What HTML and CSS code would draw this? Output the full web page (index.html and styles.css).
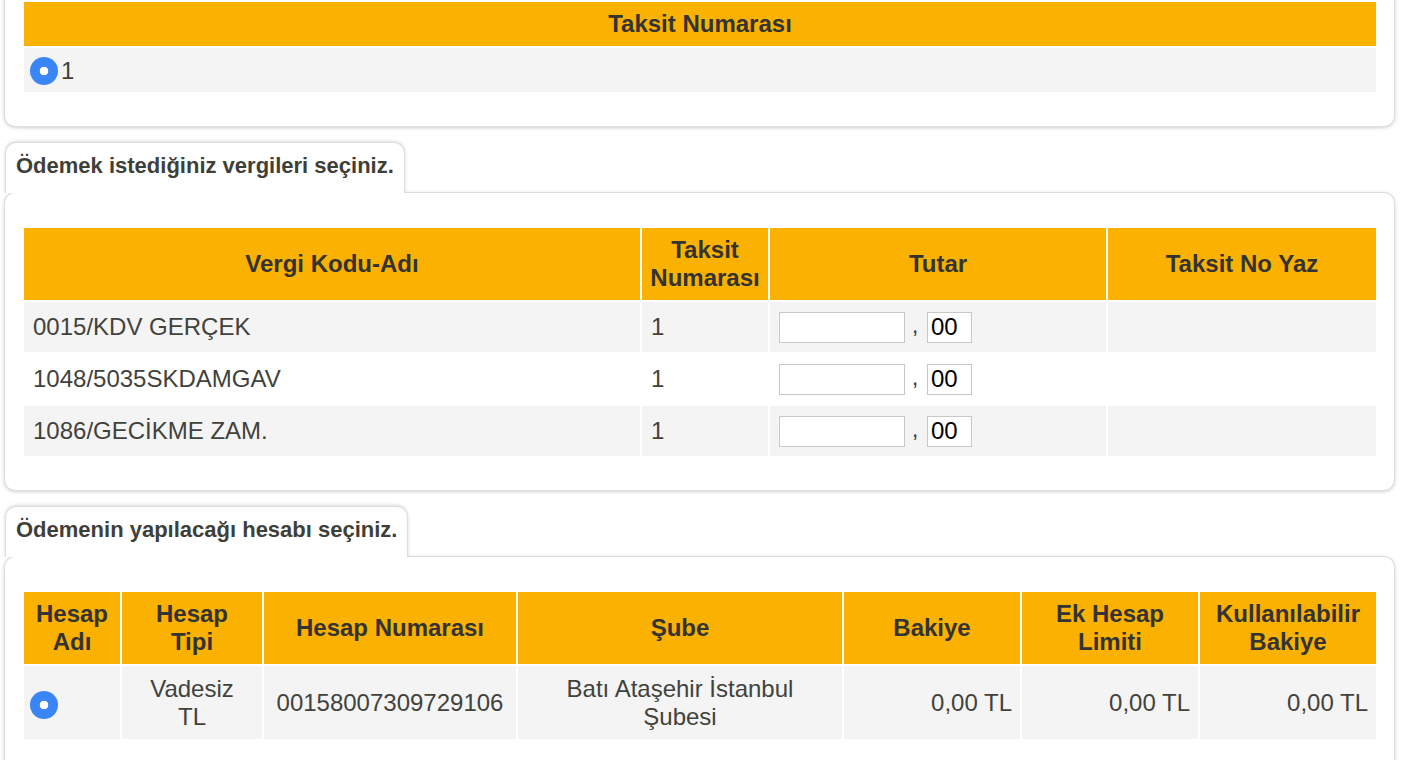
FILE: index.html
```html
<!DOCTYPE html>
<html lang="tr">
<head>
<meta charset="utf-8">
<title>Vergi Ödeme</title>
<link rel="stylesheet" href="styles.css">
</head>
<body>
<div class="page">
  <div class="card card-first">
    <table class="grid">
      <thead>
        <tr><th class="h44">Taksit Numarası</th></tr>
      </thead>
      <tbody>
        <tr class="odd r44"><td class="radio-cell"><span class="radio"></span><span>1</span></td></tr>
      </tbody>
    </table>
  </div>

  <div class="section">
    <div class="tab">Ödemek istediğiniz vergileri seçiniz.</div>
    <div class="card">
      <table class="grid">
        <colgroup>
          <col class="w616"><col class="w126"><col class="w336"><col class="w268">
        </colgroup>
        <thead>
          <tr class="h72">
            <th>Vergi Kodu-Adı</th>
            <th>Taksit Numarası</th>
            <th>Tutar</th>
            <th>Taksit No Yaz</th>
          </tr>
        </thead>
        <tbody>
          <tr class="odd r50">
            <td>0015/KDV GERÇEK</td>
            <td>1</td>
            <td><input class="in-big" type="text"> , <input class="in-small" type="text" value="00"></td>
            <td></td>
          </tr>
          <tr class="even r50">
            <td>1048/5035SKDAMGAV</td>
            <td>1</td>
            <td><input class="in-big" type="text"> , <input class="in-small" type="text" value="00"></td>
            <td></td>
          </tr>
          <tr class="odd r50">
            <td>1086/GECİKME ZAM.</td>
            <td>1</td>
            <td><input class="in-big" type="text"> , <input class="in-small" type="text" value="00"></td>
            <td></td>
          </tr>
        </tbody>
      </table>
    </div>
  </div>

  <div class="section">
    <div class="tab">Ödemenin yapılacağı hesabı seçiniz.</div>
    <div class="card">
      <table class="grid">
        <colgroup>
          <col class="w96"><col class="w140"><col class="w252"><col class="w324"><col class="w176"><col class="w176"><col class="w176">
        </colgroup>
        <thead>
          <tr class="h72">
            <th>Hesap Adı</th>
            <th>Hesap<br>Tipi</th>
            <th>Hesap Numarası</th>
            <th>Şube</th>
            <th>Bakiye</th>
            <th>Ek Hesap Limiti</th>
            <th>Kullanılabilir Bakiye</th>
          </tr>
        </thead>
        <tbody>
          <tr class="odd r73">
            <td class="radio-cell"><span class="radio"></span></td>
            <td class="center">Vadesiz<br>TL</td>
            <td class="center">00158007309729106</td>
            <td class="center">Batı Ataşehir İstanbul<br>Şubesi</td>
            <td class="right">0,00 TL</td>
            <td class="right">0,00 TL</td>
            <td class="right">0,00 TL</td>
          </tr>
        </tbody>
      </table>
    </div>
  </div>
</div>
</body>
</html>
```

FILE: styles.css
```css
* {
  box-sizing: border-box;
}

html, body {
  margin: 0;
  padding: 0;
  background: #ffffff;
  overflow: hidden;
}

body {
  font-family: "Liberation Sans", Arial, sans-serif;
  font-size: 24px;
  color: #42423c;
}

.page {
  padding: 0 16px 0 5px;
}

.card {
  background: #ffffff;
  border-radius: 10px;
  box-shadow: 0 0 0 1px #dedede, 0 1px 4px rgba(0, 0, 0, 0.28);
  padding: 33px 16px 32px 17px;
  position: relative;
  z-index: 0;
}

.card-first {
  margin-top: -33px;
}

.section {
  display: flex;
  flex-direction: column;
  align-items: flex-start;
  margin-top: 17px;
}

.section .card {
  align-self: stretch;
}

.tab {
  position: relative;
  z-index: 1;
  background: #ffffff;
  margin-left: 1px;
  margin-bottom: -2px;
  padding: 10px 10px 16px 10px;
  font-size: 22px;
  line-height: 26px;
  font-weight: bold;
  color: #3f3f3a;
  border-radius: 10px 10px 0 0;
  box-shadow: 0 0 0 1px #dedede, 0 -1px 4px rgba(0, 0, 0, 0.22);
  clip-path: inset(-8px -8px 2px -8px);
}

.grid {
  width: 100%;
  border-collapse: separate;
  border-spacing: 2px;
  table-layout: fixed;
}

.grid th {
  background: #fbb100;
  color: #333333;
  font-weight: bold;
  text-align: center;
  vertical-align: middle;
  padding: 0 6px;
  line-height: 28px;
}

.grid td {
  vertical-align: middle;
  padding: 0 9px;
  line-height: 28px;
}

.h44 { height: 44px; }
.h72 th { height: 72px; }
.r44 td { height: 44px; }
.r50 td { height: 50px; }
.r73 td { height: 73px; }

.odd td { background: #f4f4f4; }
.even td { background: #ffffff; }

.w616 { width: 616px; }
.w126 { width: 126px; }
.w336 { width: 336px; }
.w268 { width: 268px; }
.w96 { width: 96px; }
.w140 { width: 140px; }
.w252 { width: 252px; }
.w324 { width: 324px; }
.w176 { width: 176px; }

.center { text-align: center; }
.right { text-align: right; padding-right: 8px !important; }

.grid td.radio-cell {
  padding: 0 6px;
}

.radio-cell span {
  display: inline-block;
  vertical-align: middle;
}

.radio {
  width: 28px;
  height: 28px;
  border-radius: 50%;
  background: radial-gradient(circle, #ffffff 0 4px, #3b86f7 4.6px);
  margin-right: 3px;
}

.r73 .radio {
  margin-top: 4px;
}

input {
  font-family: "Liberation Sans", Arial, sans-serif;
  font-size: 24px;
  color: #000000;
  height: 31px;
  border: 1px solid #c8c8c8;
  padding: 1px 3px;
  vertical-align: middle;
  background: #ffffff;
  outline: none;
}

.in-big { width: 126px; }
.in-small { width: 45px; margin-left: 2px; }
```
